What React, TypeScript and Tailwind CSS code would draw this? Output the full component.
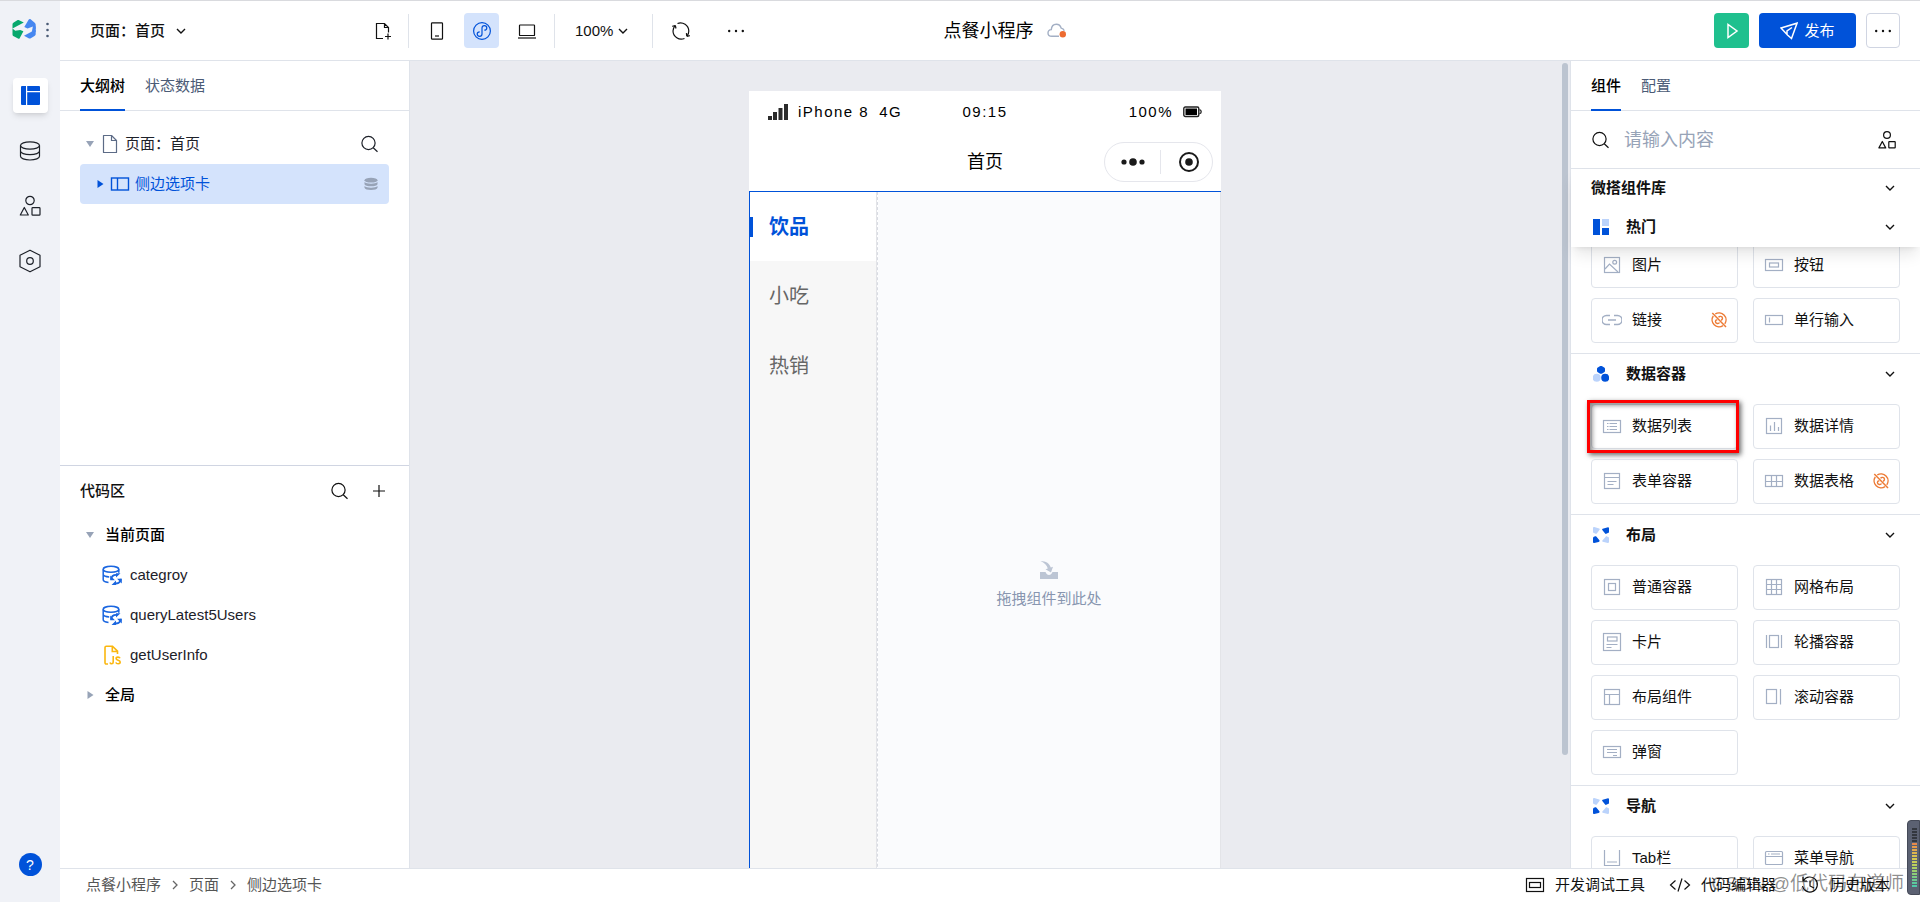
import { useState, type ReactNode } from "react";
import clsx from "clsx";

const font = "font-['Liberation_Sans','Noto_Sans_CJK_SC',sans-serif]";

type IconProps = { className?: string };

function Svg({
  size = 20,
  className,
  children,
}: {
  size?: number;
  className?: string;
  children: ReactNode;
}) {
  return (
    <svg
      width={size}
      height={size}
      viewBox={`0 0 ${size} ${size}`}
      fill="none"
      stroke="currentColor"
      strokeWidth="1.2"
      className={clsx("shrink-0", className)}
      aria-hidden="true"
    >
      {children}
    </svg>
  );
}

function Chevron({ className }: IconProps) {
  return (
    <Svg size={10} className={className}>
      <path d="M1 3l4 4 4-4" strokeWidth="1.4" />
    </Svg>
  );
}

function Crumb() {
  return (
    <Svg size={10} className="text-[#666]">
      <path d="M3 1l4 4-4 4" strokeWidth="1.3" />
    </Svg>
  );
}

function SearchIcon({ className }: IconProps) {
  return (
    <Svg size={18} className={className}>
      <circle cx="8.500" cy="8" r="6.600" />
      <path d="M13.200 12.700l4.300 4" />
    </Svg>
  );
}

function DotsIcon() {
  return (
    <Svg size={18}>
      <g fill="currentColor" stroke="none">
        <circle cx="2.200" cy="9" r="1.200" />
        <circle cx="9" cy="9" r="1.200" />
        <circle cx="15.800" cy="9" r="1.200" />
      </g>
    </Svg>
  );
}

function ShapesIcon() {
  return (
    <Svg size={22}>
      <circle cx="11" cy="5.500" r="4.200" />
      <path d="M5.300 12.500L1.300 20h8z" strokeLinejoin="round" />
      <rect x="13" y="12.600" width="8" height="7.600" rx="0.800" />
    </Svg>
  );
}

function ShapesSmallIcon() {
  return (
    <Svg size={18}>
      <circle cx="9" cy="4" r="3.400" />
      <path d="M4.300 10.500L.9 16.900h6.800z" strokeLinejoin="round" />
      <rect x="10.800" y="10.600" width="6.400" height="6.300" rx="0.500" />
    </Svg>
  );
}

function Logo() {
  return (
    <Svg size={24}>
      <g stroke="none">
        <path
          d="M5.300 2.200c.6-.3 1.200-.3 1.800 0l4.700 2.300L.500 10.500v-4c0-1 .4-1.600 1.200-2.100z"
          fill="#07a86c"
        />
        <path
          d="M.5 10.500l2.800 2.200 4.900-.7 3.200 1.200-3.600 6.700c-.4.900-1 1.100-1.800.700l-4.300-2.400c-.8-.4-1.200-1-1.200-2z"
          fill="#07a86c"
        />
        <path
          d="M12.300 9l4.300-7.300c.5-.8 1.200-1 2-.500l4.100 3.500c.7.600 1 1.200 1 2v4.800l-2.700-3-5.500 2z"
          fill="#4687f0"
        />
        <path
          d="M23.700 11.500v4.200c0 1-.3 1.600-1.200 2.200l-3.700 2.300c-.8.400-1.400.4-2.200 0l-4.600-2.400z"
          fill="#4687f0"
        />
        <path d="M23.700 8.500v5.500l-4 .5 1.300-7z" fill="#4687f0" />
      </g>
    </Svg>
  );
}

function PageIcon({ className }: IconProps) {
  return (
    <Svg size={20} className={className}>
      <path d="M3.500 1.500h8l5 5v12h-13z" strokeLinejoin="round" />
      <path d="M11.500 1.500v5h5" />
    </Svg>
  );
}

function DbQueryIcon() {
  return (
    <Svg className="text-[#1a66e0]">
      <ellipse cx="9" cy="4.300" rx="7.800" ry="3" strokeWidth="1.500" />
      <path
        d="M1.200 4.300v10.500c0 1.300 2.500 2.300 5.300 2.700M16.800 4.300v3.500M1.200 9.500c.3 1.200 2.700 2.200 6 2.400"
        strokeWidth="1.500"
      />
      <path
        d="M9.300 14.500c.1-2.800 2.200-4.600 4.900-4.600M18.700 13.800c0 2.700-2 4.600-4.700 4.700"
        strokeWidth="1.800"
      />
      <path
        d="M8.200 10.500v4.800h4.800zM19.800 18.500v-4.800H15zM14 8.200h4.500L14 12.500zM14 15.600v4.400H9.500z"
        fill="currentColor"
        stroke="none"
      />
    </Svg>
  );
}

function JsFileIcon() {
  return (
    <Svg className="text-[#fbb70f]">
      <path
        d="M6 19H4.300c-.8 0-1.300-.5-1.300-1.300V2.500c0-.8.5-1.300 1.300-1.300h6.200l5 5v2.800M10.300 1.500v5h5"
        strokeWidth="1.600"
      />
      <path
        d="M11.200 11v6c0 1.100-.6 1.800-1.500 1.800s-1.500-.5-1.700-1.300M18 13.300c-.3-.8-1-1.200-2-1.200-1.100 0-1.900.6-1.900 1.500 0 2.200 4.100 1.200 4.100 3.500 0 1-.9 1.700-2.100 1.700s-2-.5-2.200-1.500"
        strokeWidth="1.600"
      />
    </Svg>
  );
}

function UnlinkBadge() {
  return (
    <Svg size={16} className="ml-auto text-[#ed7b35]">
      <path d="M4.200 2a7 7 0 0 1 9.600 9.800M12 13.700A7 7 0 0 1 2.300 4" strokeWidth="1.400" />
      <path d="M1.300 1l13.700 14" strokeWidth="1.500" />
      <path
        d="M7.600 5.300c.8-1.500 3.900-1.200 3.900 1 0 1.100-.7 1.700-1.500 1.900M8.500 10.500c-.8 1.600-4.100 1.300-4.100-.9 0-1.200.9-1.800 1.900-1.900"
        strokeWidth="1.400"
      />
    </Svg>
  );
}

const glyphs: Record<string, ReactNode> = {
  image: (
    <>
      <rect x="2.500" y="2.500" width="15" height="15" />
      <circle cx="12.700" cy="7.300" r="1.900" />
      <path d="M3 14l4.500-5 8.500 8" />
    </>
  ),
  button: (
    <>
      <rect x="1.500" y="4.500" width="17" height="11" />
      <rect x="5.500" y="8" width="9" height="4" />
    </>
  ),
  link: (
    <path
      d="M8 5.500H4.500a4.500 4.500 0 0 0 0 9H8M12 5.500h3.500a4.500 4.500 0 0 1 0 9H12M6 10h8"
      strokeWidth="1.500"
    />
  ),
  input: (
    <>
      <rect x="1.500" y="5.500" width="17" height="9" />
      <path d="M5.500 7.500v5" />
    </>
  ),
  list: (
    <>
      <rect x="1.500" y="4.500" width="17" height="12" />
      <path d="M5 7.500h1.500M7.500 7.500H15M5 10.500h1.500M7.500 10.500H15M5 13.500h1.500M7.500 13.500H15" />
    </>
  ),
  chart: (
    <>
      <rect x="2.500" y="2.500" width="15" height="15" />
      <path d="M6.500 9.500V15M10.500 6v9M14.500 11v4" />
    </>
  ),
  form: (
    <>
      <rect x="2.500" y="2.500" width="15" height="15" />
      <path d="M3 6.500h14M5.500 10.500h9M5.500 13.500h6" />
    </>
  ),
  table: (
    <>
      <rect x="1.500" y="4.500" width="17" height="11" />
      <path d="M2 10.500h16M7.500 4.500v11M12.500 4.500v11" />
    </>
  ),
  box: (
    <>
      <rect x="2.500" y="2.500" width="15" height="15" />
      <rect x="6.500" y="6.500" width="7" height="7" />
    </>
  ),
  grid: (
    <>
      <rect x="2.500" y="2.500" width="15" height="15" />
      <path d="M3 7.500h14M3 12.500h14M7.500 3v14M12.500 3v14" />
    </>
  ),
  card: (
    <>
      <rect x="1.500" y="1.500" width="17" height="17" />
      <rect x="5.500" y="5" width="9.500" height="4" />
      <path d="M4.500 12.500h11M4.500 15.500h5" />
    </>
  ),
  carousel: (
    <>
      <rect x="5.500" y="3.500" width="9" height="12" />
      <path d="M2.500 3v13M17.500 3v13" />
    </>
  ),
  layout: (
    <>
      <rect x="2.500" y="2.500" width="15" height="15" />
      <path d="M3 7.500h14M7.500 7.500v10" />
    </>
  ),
  scroll: (
    <>
      <rect x="2.500" y="2.500" width="10" height="14" />
      <path d="M16.500 2v15.500" />
    </>
  ),
  modal: (
    <>
      <rect x="1.500" y="4.500" width="17" height="11" />
      <path d="M5 7.500h10M5 10.500h10M11 13.500h4" />
    </>
  ),
  tab: <path d="M2.500 2v15.500h15V2M5 14h10" />,
  menu: (
    <>
      <rect x="1.500" y="3.500" width="17" height="13" rx="1" />
      <path d="M2 8.500h16M4 6h1.500M7 6h9" />
    </>
  ),
};

const sectionIcons: Record<string, ReactNode> = {
  hot: (
    <>
      <path d="M0 0h7v16H0zM9 9h7v7H9z" fill="#0052d9" />
      <path d="M9 0h7v7H9z" fill="#bbd3fb" />
    </>
  ),
  data: (
    <>
      <path
        d="M8 0c.4 0 .8.1 1.200.3l2 1.200c.5.300.8.700.8 1.200v2.400c0 .5-.3 1-.8 1.200l-2 1.200c-.8.400-1.600.400-2.400 0l-2-1.200C4.300 6.100 4 5.600 4 5.100V2.700c0-.5.300-.9.800-1.200l2-1.200C7.200.1 7.600 0 8 0z"
        fill="#0052d9"
      />
      <circle cx="12.200" cy="11.800" r="4" fill="#0052d9" />
      <circle cx="3.700" cy="11.800" r="4" fill="#bbd3fb" />
    </>
  ),
  layout: (
    <>
      <path
        d="M15 .2c.6 0 1 .3 1 .8v4.500L13.300 6.800c-.5.200-.9.100-1.200-.3L9.300 3c-.3-.5-.2-1 .4-1.200zM0 15V11c.3-1.500 2-2.300 3.300-1.600l2.900 3.500c.7.900.5 1.700-.6 2L1.200 16C.5 16.100 0 15.700 0 15z"
        fill="#0052d9"
      />
      <path
        d="M1.200.1l5 1.500c.5.200.7.600.4 1.100L4 6.300c-.4.500-.8.600-1.400.4L0 5.500V1C0 .4.500-.1 1.200.1zM14.800 15.900l-5-1.200c-.6-.2-.8-.7-.4-1.300l3.300-3.700c.4-.5.900-.6 1.400-.3L16 10.500V15c0 .6-.5 1-1.200.9z"
        fill="#bbd3fb"
      />
    </>
  ),
};

type Item = { label: string; icon: string; unlink?: boolean; marked?: boolean };

const hotItems: Item[] = [
  { label: "图片", icon: "image" },
  { label: "按钮", icon: "button" },
  { label: "链接", icon: "link", unlink: true },
  { label: "单行输入", icon: "input" },
];

const sections: { title: string; icon: string; items: Item[] }[] = [
  {
    title: "数据容器",
    icon: "data",
    items: [
      { label: "数据列表", icon: "list", marked: true },
      { label: "数据详情", icon: "chart" },
      { label: "表单容器", icon: "form" },
      { label: "数据表格", icon: "table", unlink: true },
    ],
  },
  {
    title: "布局",
    icon: "layout",
    items: [
      { label: "普通容器", icon: "box" },
      { label: "网格布局", icon: "grid" },
      { label: "卡片", icon: "card" },
      { label: "轮播容器", icon: "carousel" },
      { label: "布局组件", icon: "layout" },
      { label: "滚动容器", icon: "scroll" },
      { label: "弹窗", icon: "modal" },
    ],
  },
  {
    title: "导航",
    icon: "layout",
    items: [
      { label: "Tab栏", icon: "tab" },
      { label: "菜单导航", icon: "menu" },
    ],
  },
];

function ItemGrid({ items }: { items: Item[] }) {
  return (
    <div className="grid grid-cols-2 gap-x-[15px] gap-y-2.5 px-5">
      {items.map((it) => (
        <div key={it.label} className="relative">
          <button className="flex h-[45px] w-full items-center gap-2.5 rounded border border-[#dfe3ea] px-2.5 pb-px">
            <Svg className="text-[#a3afc4]">{glyphs[it.icon]}</Svg>
            {it.label}
            {it.unlink && <UnlinkBadge />}
          </button>
          {it.marked && (
            <div className="pointer-events-none absolute -inset-y-1 -right-px -left-1 border-[3px] border-[#f00] shadow-[2px_2px_5px_rgba(0,0,0,0.6),inset_2px_2px_5px_rgba(0,0,0,0.5)]" />
          )}
        </div>
      ))}
    </div>
  );
}

function SectionHead({ title, icon }: { title: string; icon: string }) {
  return (
    <button className="flex h-10 w-full items-center pr-[25px] pl-[22px] font-bold">
      <Svg size={16}>
        <g stroke="none">{sectionIcons[icon]}</g>
      </Svg>
      <span className="ml-[17px]">{title}</span>
      <Chevron className="ml-auto" />
    </button>
  );
}

function Tabs({ items }: { items: string[] }) {
  const [active, setActive] = useState(items[0]);
  return (
    <div role="tablist" className="flex h-[50px] shrink-0 gap-5 border-b border-[#dfe3ea] px-5">
      {items.map((t) => (
        <button
          key={t}
          role="tab"
          aria-selected={t === active}
          onClick={() => setActive(t)}
          className={clsx(
            "-mb-px border-b-2 pt-0.5",
            t === active
              ? "border-[#0052d9] font-medium text-black"
              : "border-transparent text-[#4b5b76]",
          )}
        >
          {t}
        </button>
      ))}
    </div>
  );
}

function Rail() {
  return (
    <nav className="flex w-[60px] shrink-0 flex-col items-center bg-[#f0f2f7] pb-[26px]">
      <div className="mt-[17px] flex h-6 w-full items-center gap-2.5 pl-3">
        <Logo />
        <svg width="4" height="16" viewBox="0 0 4 16" fill="#4b5b76" aria-hidden="true">
          <circle cx="1.500" cy="2" r="1.300" />
          <circle cx="1.500" cy="8" r="1.300" />
          <circle cx="1.500" cy="14" r="1.300" />
        </svg>
      </div>
      <div className="mt-9 flex flex-col gap-5 text-[#1d2129]">
        <button
          aria-label="页面"
          className="flex size-[35px] items-center justify-center rounded bg-white text-[#0052d9] shadow-md"
        >
          <svg width="19" height="19" viewBox="0 0 19 19" fill="currentColor" aria-hidden="true">
            <path d="M1 0h4v19H1a1 1 0 0 1-1-1V1a1 1 0 0 1 1-1zM6.200 0H18a1 1 0 0 1 1 1v4H6.200zM6.200 6.200H19V18a1 1 0 0 1-1 1H6.200z" />
          </svg>
        </button>
        <button aria-label="数据" className="flex size-[35px] items-center justify-center">
          <Svg size={22}>
            <ellipse cx="11" cy="5.500" rx="9.500" ry="3.700" />
            <path d="M1.500 5.500v10.800c0 2 4 3.700 9.500 3.700s9.500-1.700 9.500-3.700V5.500M1.500 11c0 2 4 3.700 9.500 3.700s9.500-1.700 9.500-3.700" />
          </Svg>
        </button>
        <button aria-label="组件" className="flex size-[35px] items-center justify-center">
          <ShapesIcon />
        </button>
        <button aria-label="设置" className="flex size-[35px] items-center justify-center">
          <Svg size={24}>
            <path d="M12 1.200l10 5v11.600l-10 5-10-5V6.200z" strokeLinejoin="round" />
            <circle cx="12" cy="12" r="3.300" />
          </Svg>
        </button>
      </div>
      <button
        aria-label="帮助"
        className="mt-auto flex size-[23px] items-center justify-center rounded-full bg-[#0052d9] text-sm text-white"
      >
        ?
      </button>
    </nav>
  );
}

function Divider() {
  return <div className="h-[34px] w-px bg-[#dfe3ea]" />;
}

function Header() {
  return (
    <header className="flex h-[60px] shrink-0 items-center border-b border-[#dfe3ea] bg-white pr-5 pl-[30px]">
      <div className="flex flex-1 items-center">
        <label className="flex w-[285px] items-center gap-2.5">
          <select aria-label="页面" className="appearance-none bg-transparent font-medium">
            <option>页面：首页</option>
          </select>
          <Chevron />
        </label>
        <button aria-label="新建页面" className="mr-[15px]">
          <Svg size={18}>
            <path d="M8 16.500H1.500V1.500h8l4 4v5M9.500 1.500v4h4M13 11.500v6M10 14.500h6" />
          </Svg>
        </button>
        <Divider />
        <div className="flex items-center gap-2.5 px-2.5">
          <button aria-label="手机" className="flex size-[35px] items-center justify-center">
            <Svg>
              <rect x="4.500" y="1.800" width="11" height="16.400" rx="0.800" />
              <path d="M8 15h4" />
            </Svg>
          </button>
          <button
            aria-label="小程序"
            className="flex size-[35px] items-center justify-center rounded bg-[#d4e3fc] text-[#0052d9]"
          >
            <Svg>
              <circle cx="10" cy="10" r="8.400" />
              <path d="M10 7v6c0 1.400-1.100 2.300-2.400 2.300S5.200 14.400 5.200 13.100s1.100-2.200 2.500-2.200M10 13V7c0-1.400 1.100-2.300 2.400-2.300s2.400.9 2.400 2.200-1.100 2.200-2.500 2.200" />
            </Svg>
          </button>
          <button aria-label="电脑" className="flex size-[35px] items-center justify-center">
            <Svg>
              <rect x="2.500" y="4" width="15" height="10.500" rx="0.600" />
              <path d="M1 17h18" />
            </Svg>
          </button>
        </div>
        <Divider />
        <label className="flex w-[97px] items-center gap-1 pl-5">
          <select aria-label="缩放" className="appearance-none bg-transparent">
            <option>100%</option>
          </select>
          <Chevron />
        </label>
        <Divider />
        <button aria-label="刷新" className="ml-[18px]">
          <Svg>
            <path d="M6.500 2.500a8.300 8.300 0 0 1 11.300 7.500c0 2-.6 3.600-1.700 5M13.500 17.500A8.300 8.300 0 0 1 2 10c0-2 .7-3.800 2-5.200" />
            <path d="M4.300 4.500l-3 .8M4.300 4.500l.7 3M15.800 15.300l3-.6M15.800 15.300l-.4-3.200" />
          </Svg>
        </button>
        <button aria-label="更多" className="ml-9">
          <DotsIcon />
        </button>
      </div>
      <div className="flex items-center gap-[13px] pl-5">
        <h1 className="text-lg text-black">点餐小程序</h1>
        <svg width="20" height="15" viewBox="0 0 20 15" fill="none" aria-hidden="true">
          <path
            d="M12 13.300H4.800C2.500 13.300 1 11.900 1 10s1.400-3.300 3.300-3.400C4.500 3.500 6.500 1.200 9.300 1.200c2.400 0 4.200 1.500 4.900 3.900 1.600.3 2.600 1.200 3.100 2.600"
            stroke="#a3afc4"
            strokeWidth="1.400"
          />
          <circle cx="15.800" cy="11.300" r="3.200" fill="#ed6b30" />
        </svg>
      </div>
      <div className="flex flex-1 items-center justify-end gap-2.5">
        <button
          aria-label="预览"
          className="flex size-[35px] items-center justify-center rounded bg-[#1fc08e] text-white"
        >
          <Svg size={18}>
            <path d="M5 2.500v13l9-6.500z" strokeWidth="1.500" />
          </Svg>
        </button>
        <button className="flex h-[35px] w-[97px] items-center justify-center gap-1.5 rounded bg-[#0052d9] text-white">
          <Svg size={18}>
            <path d="M1 6L17 1.200 11.500 16.500 7.500 13 1 6zM7 12.500V9l5-3.500" strokeWidth="1.500" />
          </Svg>
          发布
        </button>
        <button
          aria-label="更多操作"
          className="flex h-[35px] w-[34px] items-center justify-center rounded border border-[#d0d5e2]"
        >
          <DotsIcon />
        </button>
      </div>
    </header>
  );
}

function Caret({ right = false, className }: { right?: boolean; className?: string }) {
  return (
    <svg
      width="8"
      height="8"
      viewBox="0 0 8 8"
      fill="currentColor"
      className={clsx("shrink-0", className)}
      aria-hidden="true"
    >
      <path d={right ? "M1.500 0l6 4-6 4z" : "M0 1h8L4 7z"} />
    </svg>
  );
}

function LeftPanel() {
  return (
    <aside className="flex w-[350px] shrink-0 flex-col border-r border-[#dfe3ea] bg-white">
      <Tabs items={["大纲树", "状态数据"]} />
      <div className="h-[354px] px-5 pt-[13px]">
        <div className="flex h-10 items-center pr-[11px] pl-1.5 text-[#1d2129]">
          <Caret className="text-[#97a3b7]" />
          <PageIcon className="ml-1.5 text-[#5c6b86]" />
          <span className="ml-[5px]">页面：首页</span>
          <button aria-label="搜索" className="ml-auto">
            <SearchIcon />
          </button>
        </div>
        <div className="flex h-10 items-center rounded bg-[#d4e3fc] pr-[11px] pl-4 text-[#0052d9]">
          <Caret right />
          <Svg className="ml-1.5">
            <rect x="1.500" y="4" width="17" height="12" strokeWidth="1.400" />
            <path d="M7.500 4v12" strokeWidth="1.400" />
          </Svg>
          <span className="ml-[5px]">侧边选项卡</span>
          <svg
            width="14"
            height="14"
            viewBox="0 0 14 14"
            fill="#97a3b7"
            className="ml-auto"
            aria-hidden="true"
          >
            <ellipse cx="7" cy="3.200" rx="6.500" ry="2.400" />
            <path d="M.5 5c1 1.200 3.500 1.700 6.500 1.700S12.500 6.200 13.500 5v2.200C13 8.500 10.500 9.300 7 9.300S1 8.500.5 7.200z" />
            <path d="M.5 9c1 1.200 3.500 1.700 6.500 1.700s5.500-.5 6.500-1.700v1.700c-.5 1.300-3 2.300-6.500 2.300S1 12 .5 10.700z" />
          </svg>
        </div>
      </div>
      <section className="flex-1 border-t border-[#d0d5e2]">
        <div className="flex h-[49px] items-center pr-[23px] pl-5">
          <h2 className="font-medium">代码区</h2>
          <button aria-label="搜索代码" className="ml-auto">
            <SearchIcon />
          </button>
          <button aria-label="新增" className="ml-6">
            <Svg size={14}>
              <path d="M7 1v12M1 7h12" />
            </Svg>
          </button>
        </div>
        <div className="px-5 text-[#1d2129]">
          <div className="flex h-10 items-center gap-[11px] pl-1.5 font-medium text-black">
            <Caret className="text-[#97a3b7]" />
            当前页面
          </div>
          <div className="flex h-10 items-center gap-2 pl-[22px]">
            <DbQueryIcon />
            categroy
          </div>
          <div className="flex h-10 items-center gap-2 pl-[22px]">
            <DbQueryIcon />
            queryLatest5Users
          </div>
          <div className="flex h-10 items-center gap-2 pl-[22px]">
            <JsFileIcon />
            getUserInfo
          </div>
          <div className="flex h-10 items-center gap-[11px] pl-1.5 font-medium text-black">
            <Caret right className="text-[#97a3b7]" />
            全局
          </div>
        </div>
      </section>
    </aside>
  );
}

function Phone() {
  return (
    <div className="mt-[30px] w-[472px] shrink-0 bg-white">
      <div className="grid h-[42px] grid-cols-3 items-center px-[19px] tracking-widest text-black">
        <div className="flex items-center gap-2.5">
          <svg width="20" height="16" viewBox="0 0 20 16" fill="#2b2b2b" aria-hidden="true">
            <path d="M0 12h4v4H0zM5 8h4v8H5zM10.500 4h4v12h-4zM16 0h4v16h-4z" />
          </svg>
          <span>iPhone 8</span>
          <span>4G</span>
        </div>
        <span className="text-center">09:15</span>
        <div className="flex items-center justify-end gap-2.5">
          <span>100%</span>
          <svg width="19" height="12" viewBox="0 0 19 12" fill="none" aria-hidden="true">
            <rect x="0.800" y="1" width="15" height="9.500" rx="1.500" stroke="#222" strokeWidth="1.400" />
            <rect x="2.500" y="2.500" width="11.500" height="6.500" fill="#000" />
            <path d="M16.500 3.700c1.200.3 1.700 1 1.700 2s-.5 1.700-1.700 2" stroke="#222" strokeWidth="1.300" />
          </svg>
        </div>
      </div>
      <div className="grid h-[58px] grid-cols-3 items-center px-2">
        <span className="col-start-2 text-center text-lg text-black">首页</span>
        <div className="ml-auto flex h-10 w-[109px] items-center rounded-full border border-[#e5e6ec] text-[#1a1a1a]">
          <button aria-label="菜单" className="flex w-[55px] justify-center">
            <svg width="24" height="8" viewBox="0 0 24 8" fill="currentColor" aria-hidden="true">
              <circle cx="3" cy="4" r="2.600" />
              <circle cx="12" cy="4" r="3.800" />
              <circle cx="21" cy="4" r="2.600" />
            </svg>
          </button>
          <div className="h-6 w-px bg-[#e5e6ec]" />
          <button aria-label="关闭" className="flex flex-1 justify-center pl-1">
            <svg width="20" height="20" viewBox="0 0 20 20" aria-hidden="true">
              <circle cx="10" cy="10" r="9" fill="none" stroke="currentColor" strokeWidth="2" />
              <circle cx="10" cy="10" r="3.800" fill="currentColor" />
            </svg>
          </button>
        </div>
      </div>
      <div className="flex min-h-[786px] border-t border-l border-[#0052d9]">
        <div className="flex w-[127px] shrink-0 flex-col border-r border-[#e3e4e8] bg-[#f7f7f7] text-xl text-[#666]">
          <button className="flex h-[69px] items-center bg-white font-bold text-[#0052d9]">
            <span className="mr-4 h-5 w-[3px] bg-[#0052d9]" />
            饮品
          </button>
          <button className="flex h-[70px] items-center pl-[19px]">小吃</button>
          <button className="flex h-[70px] items-center pl-[19px]">热销</button>
        </div>
        <div className="flex flex-1 border-l border-dashed border-[#d8dbe2]">
          <div className="flex flex-1 flex-col items-center justify-center gap-2.5 border-r border-[#e3e4e8] bg-[#fafbfd] text-[#8896b0]">
            <svg width="18" height="18" viewBox="0 0 18 18" fill="#bcc5d4" aria-hidden="true">
              <path d="M.5 0c5.500 0 9.300 2.800 10.300 6.500L13 5.800 11 11.500 5.500 8.200 7.800 7.500C7 4.500 4.500 1.500.5 0z" />
              <path d="M0 11h5.500c.8 2 2 3 3.500 3s2.700-1 3.500-3H18v7H0z" />
            </svg>
            拖拽组件到此处
          </div>
        </div>
      </div>
    </div>
  );
}

function RightPanel() {
  return (
    <aside className="flex w-[350px] shrink-0 flex-col border-l border-[#dfe3ea] bg-white">
      <Tabs items={["组件", "配置"]} />
      <div className="flex h-[58px] shrink-0 items-center border-b border-[#dfe3ea] pr-6 pl-5">
        <SearchIcon />
        <input
          aria-label="搜索组件"
          placeholder="请输入内容"
          className="ml-[15px] min-w-0 flex-1 text-lg outline-none placeholder:text-[#97a3b7]"
        />
        <ShapesSmallIcon />
      </div>
      <div className="z-10 shrink-0 bg-white shadow-lg">
        <button className="flex h-[38px] w-full items-center justify-between pr-[25px] pl-5 font-bold">
          微搭组件库
          <Chevron />
        </button>
        <SectionHead title="热门" icon="hot" />
      </div>
      <div className="min-h-0 flex-1 overflow-hidden">
        <div className="-mt-1 pb-2.5">
          <ItemGrid items={hotItems} />
        </div>
        {sections.map((s) => (
          <section key={s.title} className="border-t border-[#dfe3ea] pb-2.5">
            <div className="pb-2.5">
              <SectionHead title={s.title} icon={s.icon} />
            </div>
            <ItemGrid items={s.items} />
          </section>
        ))}
      </div>
    </aside>
  );
}

function Footer() {
  return (
    <footer className="flex h-[34px] shrink-0 items-center border-t border-[#dfe3ea] bg-white pr-[30px] pb-px pl-[26px]">
      <nav className="flex items-center gap-[9px] text-[#555]">
        <a href="#app">点餐小程序</a>
        <Crumb />
        <a href="#pages">页面</a>
        <Crumb />
        <a href="#side-tab">侧边选项卡</a>
      </nav>
      <div className="ml-auto flex items-center gap-6">
        <button className="flex items-center gap-2.5">
          <Svg>
            <rect x="1.500" y="3.500" width="17" height="13" />
            <rect x="4.500" y="7.500" width="11" height="5" />
          </Svg>
          开发调试工具
        </button>
        <button className="flex items-center gap-2.5">
          <Svg size={22}>
            <path d="M6.500 6.500L1.500 11l5 4.500M15.500 6.500l5 4.500-5 4.500M13 4.500L9 17.500" />
          </Svg>
          代码编辑器
        </button>
        <button className="flex items-center gap-2.5">
          <Svg>
            <path d="M3.500 5.500a7.500 7.500 0 1 1-1 5.500M3 2v4h4M10 5.500V11l4 2" />
          </Svg>
          历史版本
        </button>
      </div>
    </footer>
  );
}

const meterColors = [
  "#33373f", "#33373f", "#33373f", "#33373f", "#33373f", "#e88a4a", "#e89a4a",
  "#e0a84c", "#dcb44e", "#d8c050", "#d4c852", "#c8cc56", "#bccf5c", "#acd064",
  "#9ccf6e", "#8cce78", "#7ccc84", "#6cca90", "#5cc89c", "#50c8a8",
];

function Meter() {
  return (
    <div className="absolute right-0 bottom-[7px] flex w-[13px] flex-col gap-px rounded-l border border-[#454a58] bg-[#5b6172] py-[7px] pr-0.5 pl-1">
      {meterColors.map((c, i) => (
        <div key={i} className="h-0.5" style={{ background: c }} />
      ))}
    </div>
  );
}

export default function App() {
  return (
    <div
      className={clsx(
        font,
        "relative flex h-screen overflow-hidden border-t border-[#d9dade] bg-[#eaebf0] text-[15px] leading-5 text-[#111]",
      )}
    >
      <Rail />
      <div className="flex min-w-0 flex-1 flex-col">
        <Header />
        <div className="flex min-h-0 flex-1">
          <LeftPanel />
          <main className="flex min-w-0 flex-1 items-start overflow-hidden">
            <div className="flex min-w-0 flex-1 justify-center">
              <Phone />
            </div>
            <div className="h-full w-2.5 px-0.5 pt-0.5">
              <div className="h-[86%] rounded-full bg-[#bcc4d0]" />
            </div>
          </main>
          <RightPanel />
        </div>
        <Footer />
      </div>
      <div className="pointer-events-none absolute right-4 bottom-2 text-[19px] text-black/45">
        CSDN @低代码布道师
      </div>
      <Meter />
    </div>
  );
}
